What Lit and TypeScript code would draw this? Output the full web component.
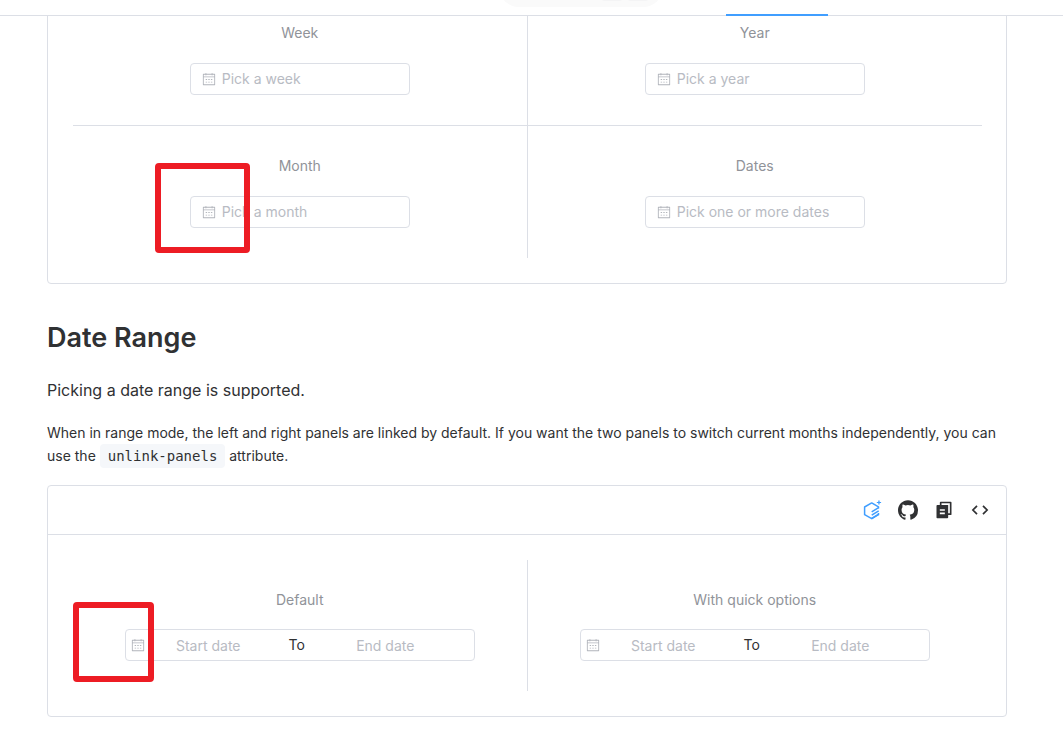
import { LitElement, html, css, svg } from "lit";
import { customElement, property } from "lit/decorators.js";

const calendarIcon = html`<svg class="calendar" viewBox="0 0 1024 1024" aria-hidden="true">
  <path fill="currentColor" d="M128 384v512h768V192H768v32a32 32 0 1 1-64 0v-32H320v32a32 32 0 0 1-64 0v-32H128v128h768v64zm192-256h384V96a32 32 0 1 1 64 0v32h160a32 32 0 0 1 32 32v768a32 32 0 0 1-32 32H96a32 32 0 0 1-32-32V160a32 32 0 0 1 32-32h160V96a32 32 0 0 1 64 0zm-32 384h64a32 32 0 0 1 0 64h-64a32 32 0 0 1 0-64m0 192h64a32 32 0 1 1 0 64h-64a32 32 0 1 1 0-64m192-192h64a32 32 0 0 1 0 64h-64a32 32 0 0 1 0-64m0 192h64a32 32 0 1 1 0 64h-64a32 32 0 1 1 0-64m192-192h64a32 32 0 1 1 0 64h-64a32 32 0 1 1 0-64m0 192h64a32 32 0 1 1 0 64h-64a32 32 0 1 1 0-64"/>
</svg>`;

const tools = [
  {
    label: "Edit in Playground",
    kind: "tool brand",
    box: "0 0 20 20",
    icon: svg`<path fill="none" stroke="currentColor" stroke-width="1.5" stroke-linejoin="round" d="M16.500 8.400V6.800L9.700 2.900 2.600 7v7.700l7.100 4 6.800-4v-1.600"/>
      <path fill="none" stroke="currentColor" stroke-width="1.500" d="M16.600 7.600 9.700 11.900M16.700 10.900 9.700 15.200M16.700 14.200 9.700 18.500"/>
      <path fill="currentColor" d="M16.300.4h1.300v1.500h1.500v1.200h-1.500v1.500h-1.300V3.100h-1.500V1.900h1.500z"/>`,
  },
  {
    label: "Edit on GitHub",
    kind: "tool",
    box: "0 0 24 24",
    icon: svg`<path fill="currentColor" d="M12 .3C5.400.3 0 5.700 0 12.300c0 5.300 3.400 9.800 8.200 11.400.6.1.8-.3.8-.6v-2.200c-3.300.7-4-1.400-4-1.400-.6-1.400-1.400-1.800-1.400-1.800-1-.7.1-.7.1-.7 1.200.1 1.800 1.200 1.800 1.200 1.100 1.800 2.800 1.300 3.500 1 .1-.8.400-1.300.8-1.600-2.700-.3-5.500-1.300-5.500-5.900 0-1.300.5-2.400 1.200-3.200-.1-.3-.5-1.500.1-3.200 0 0 1-.3 3.300 1.200a11.500 11.500 0 0 1 6 0c2.300-1.500 3.300-1.200 3.300-1.200.7 1.700.2 2.900.1 3.200.8.8 1.200 1.900 1.200 3.200 0 4.600-2.800 5.600-5.500 5.900.4.400.8 1.100.8 2.200v3.300c0 .3.2.7.8.6A12 12 0 0 0 24 12.300C24 5.700 18.600.3 12 .3"/>`,
  },
  {
    label: "Copy code",
    kind: "tool",
    box: "0 0 24 24",
    icon: svg`<path fill="currentColor" d="M7 6V3a1 1 0 0 1 1-1h12a1 1 0 0 1 1 1v14a1 1 0 0 1-1 1h-3v3c0 .6-.5 1-1 1H4a1 1 0 0 1-1-1V7c0-.6.5-1 1-1zm2 0h8v10h2V4H9zm-2 5v2h6v-2zm0 4v2h6v-2z"/>`,
  },
  {
    label: "View source",
    kind: "tool",
    box: "0 0 20 20",
    icon: svg`<path fill="none" stroke="currentColor" stroke-width="1.7" d="M7 5.900 2.900 10 7 14.100M13 5.900 17.100 10 13 14.100"/>`,
  },
];

@customElement("date-field")
class DateField extends LitElement {
  @property() label = "";
  @property() placeholder = "";

  static styles = css`
    :host { display: flex; flex-direction: column; align-items: center; gap: 20px; }
    .label { color: #909399; font-size: 14px; line-height: 20px; }
    .box {
      box-sizing: border-box; display: flex; align-items: center; gap: 6px;
      width: 220px; max-width: 100%; height: 32px; padding: 0 11px;
      border: 1px solid #dcdfe6; border-radius: 4px; background: #fff; color: #b1b4bb;
    }
    .calendar { flex: none; width: 14px; height: 14px; }
    .input {
      box-sizing: border-box; flex: 1; min-width: 0; height: 30px; padding: 0 0 2px; border: 0;
      outline: 0; background: none; font: inherit; font-size: 14px; color: #606266;
    }
    .input::placeholder { color: #b8bbc3; opacity: 1; }
  `;

  render() {
    return html`
      <label class="label" for="date">${this.label}</label>
      <div class="box">
        ${calendarIcon}
        <input class="input" id="date" type="text" placeholder=${this.placeholder} />
      </div>
    `;
  }
}

@customElement("date-range-field")
class DateRangeField extends LitElement {
  @property() label = "";

  static styles = css`
    :host { display: flex; flex-direction: column; align-items: center; gap: 19px; }
    .label { color: #909399; font-size: 14px; line-height: 20px; }
    .box {
      box-sizing: border-box; display: flex; align-items: center;
      width: 350px; max-width: 100%; height: 32px; padding: 0 5px;
      border: 1px solid #dcdfe6; border-radius: 4px; background: #fff;
    }
    .calendar { flex: none; width: 14px; height: 14px; color: #b1b4bb; }
    .input {
      flex: 0 1 127px; min-width: 0; height: 30px; padding: 0; border: 0; outline: 0;
      box-sizing: border-box; background: none; font: inherit; font-size: 14px;
      text-align: center; color: #606266;
    }
    .input::placeholder { color: #b8bbc3; opacity: 1; }
    .separator { flex: 0 1 50px; text-align: center; font-size: 14px; line-height: 30px; color: #303133; }
  `;

  render() {
    return html`
      <label class="label" for="start">${this.label}</label>
      <div class="box">
        ${calendarIcon}
        <input class="input" id="start" type="text" placeholder="Start date" />
        <span class="separator">To</span>
        <input class="input" type="text" placeholder="End date" aria-label="${this.label} end date" />
      </div>
    `;
  }
}

@customElement("app-root")
class AppRoot extends LitElement {
  static styles = css`
    :host {
      display: block; position: relative; background: #fff; color: #303133;
      font-family: Inter, "Liberation Sans", sans-serif;
    }
    .topbar {
      position: relative; z-index: 1; box-sizing: border-box; height: 16px;
      background: #fff; border-bottom: 1px solid #dcdfe6;
    }
    .search {
      position: absolute; top: -33px; right: 400px; width: 164px; height: 40px;
      box-sizing: border-box; padding: 0 14px 6px; border-radius: 20px; background: #fafafa;
      display: flex; align-items: flex-end; justify-content: flex-end; gap: 4px;
    }
    .key { width: 22px; height: 18px; border-radius: 4px; background: #f4f4f5; }
    .active-tab {
      position: absolute; right: 235px; bottom: -1px; width: 102px; height: 2px; background: #409eff;
    }
    .content { padding: 0 56px 32px 47px; }
    .card { border: 1px solid #dcdfe6; border-radius: 4px; }
    .scrolled { margin-top: -49px; }
    .grid { display: grid; grid-template-columns: 1fr 1fr; padding: 25px 24px 25px 25px; }
    .cell { padding: 30px 0; }
    .left { border-right: 1px solid #dcdfe6; }
    .ruled { border-bottom: 1px solid #dcdfe6; }
    .title { margin: 37px 0 0; font-size: 27px; line-height: 34px; font-weight: 600; }
    .lead { margin: 22px 0 0; font-size: 16px; line-height: 26px; }
    .text { margin: 18px 0 17px; font-size: 14px; line-height: 23px; }
    .code {
      display: inline-block; padding: 0 8px; border-radius: 4px; background: #f5f7fa;
      font-family: "DejaVu Sans Mono", monospace; font-size: 14px; line-height: 24px;
      vertical-align: top;
    }
    .toolbar {
      display: flex; align-items: center; justify-content: flex-end; gap: 16px;
      height: 48px; padding: 0 16px; border-bottom: 1px solid #dcdfe6;
    }
    .tool {
      display: flex; align-items: center; justify-content: center; width: 20px; height: 20px;
      padding: 0; border: 0; background: none; color: #303133; cursor: pointer;
    }
    .brand { color: #409eff; }
    .glyph { width: 20px; height: 20px; }
    .mark { position: absolute; box-sizing: border-box; z-index: 2; border: 6px solid #ed1c24; border-radius: 4px; pointer-events: none; }
    .mark-month { left: 155px; top: 163px; width: 95px; height: 90px; }
    .mark-range { left: 73px; top: 602px; width: 81px; height: 80px; }
  `;

  render() {
    return html`
      <header class="topbar">
        <div class="search"><span class="key"></span><span class="key"></span></div>
        <div class="active-tab"></div>
      </header>
      <main class="content">
        <section class="card scrolled">
          <div class="grid">
            <date-field class="cell left ruled" label="Week" placeholder="Pick a week"></date-field>
            <date-field class="cell ruled" label="Year" placeholder="Pick a year"></date-field>
            <date-field class="cell left" label="Month" placeholder="Pick a month"></date-field>
            <date-field class="cell" label="Dates" placeholder="Pick one or more dates"></date-field>
          </div>
        </section>
        <h2 class="title">Date Range</h2>
        <p class="lead">Picking a date range is supported.</p>
        <p class="text">
          When in range mode, the left and right panels are linked by default. If you want the two
          panels to switch current months independently, you can use the
          <code class="code">unlink-panels</code> attribute.
        </p>
        <section class="card">
          <div class="toolbar">
            ${tools.map(
              (t) => html`<button class=${t.kind} type="button" aria-label=${t.label}>
                <svg class="glyph" viewBox=${t.box} aria-hidden="true">${t.icon}</svg>
              </button>`
            )}
          </div>
          <div class="grid">
            <date-range-field class="cell left" label="Default"></date-range-field>
            <date-range-field class="cell" label="With quick options"></date-range-field>
          </div>
        </section>
      </main>
      <div class="mark mark-month"></div>
      <div class="mark mark-range"></div>
    `;
  }
}
